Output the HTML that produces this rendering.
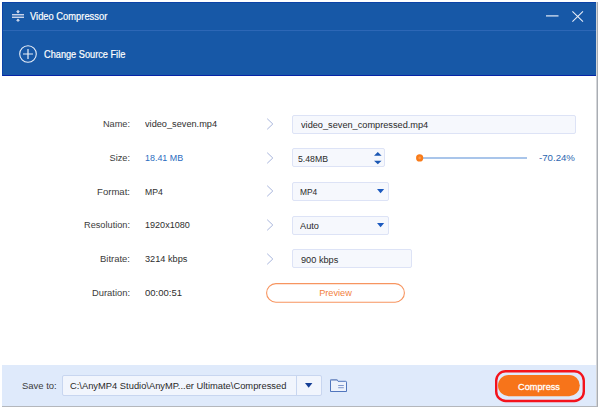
<!DOCTYPE html>
<html><head><meta charset="utf-8">
<style>
*{margin:0;padding:0;box-sizing:border-box}
html,body{width:600px;height:409px;background:#fff;overflow:hidden}
body{font-family:"Liberation Sans",sans-serif;font-size:9.6px;color:#333;position:relative}
.win{position:absolute;left:2px;top:2px;width:596px;height:405px;background:#fff;border-right:1px solid #a9adb3;border-bottom:1px solid #b4b7bc}
.hdr{position:absolute;left:0;top:0;width:594px;height:74px;background:#1758a7;border-left:1px solid #0c43a8;border-top:1px solid #0c43a8;border-bottom:1px solid #0624a6}
.sep{position:absolute;left:0;top:27px;width:593px;height:1px;background:#2d67b6}
.t{position:absolute;white-space:nowrap;line-height:12px;transform-origin:0 50%;transform:scaleX(.958)}
.title{left:26.8px;top:7.6px;color:#fff;font-size:10.2px;transform:scaleX(.918);-webkit-text-stroke:.2px #fff}
.chg{left:40.6px;top:45.5px;color:#fff;font-size:10.2px;transform:scaleX(.903);-webkit-text-stroke:.2px #fff}
.lbl{color:#3c3c3c;text-align:right;width:100px;left:28px;transform-origin:100% 50%}
.val{left:143px;color:#2e2e2e}
.box{position:absolute;border:1px solid #dde3f6;background:#f6f8fd;border-radius:2px}
.box .t{left:7px;color:#2a2a2a}
.ftr{position:absolute;left:0;top:363px;width:594px;height:41px;background:#dfeafb}
svg{position:absolute;overflow:visible}
.chev{left:264px}
</style></head><body>
<div class="win">
 <div style="position:absolute;left:594px;top:0;width:1px;height:404px;background:#d4d6d9"></div>
 <div class="hdr">
  <div class="sep"></div>
  <svg style="left:7.8px;top:6.4px" width="14" height="14" viewBox="0 0 14 14"><g fill="#dde2f2"><rect x="1" y="5.1" width="12" height="1.3"/><rect x="1" y="7.6" width="12" height="1.3"/><path d="M7 4.5L5 2.3h1.4V1h1.2v1.3H9z"/><path d="M7 9.6L5 11.8h1.4v1h1.2v-1H9z"/></g></svg>
  <div class="t title">Video Compressor</div>
  <svg style="left:542.5px;top:12.4px" width="13" height="2"><rect width="12.5" height="1.2" y="0.3" fill="#e6ecf7"/></svg>
  <svg style="left:569px;top:8px" width="12" height="12" viewBox="0 0 12 12"><path d="M0.4 0.4L11 10.6M11 0.4L0.4 10.6" stroke="#e6ecf7" stroke-width="1.1" fill="none"/></svg>
  <svg style="left:15.7px;top:41.9px" width="18" height="18" viewBox="0 0 18 18"><circle cx="9" cy="9" r="8.3" fill="none" stroke="#e8eef8" stroke-width="1.1"/><path d="M4 9H14M9 4V14" stroke="#e8eef8" stroke-width="1.2"/></svg>
  <div class="t chg">Change Source File</div>
 </div>

 <div class="t lbl" style="top:116.1px">Name:</div><div class="t val" style="top:116.1px">video_seven.mp4</div>
 <div class="t lbl" style="top:149.9px">Size:</div><div class="t val" style="top:149.9px;color:#2b6cc0;transform:scaleX(0.929)">18.41 MB</div>
 <div class="t lbl" style="top:183.6px;transform:scaleX(0.996)">Format:</div><div class="t val" style="top:183.6px;transform:scaleX(0.901)">MP4</div>
 <div class="t lbl" style="top:217.4px">Resolution:</div><div class="t val" style="top:217.4px;transform:scaleX(0.944)">1920x1080</div>
 <div class="t lbl" style="top:251.1px;transform:scaleX(0.987)">Bitrate:</div><div class="t val" style="top:251.1px">3214 kbps</div>
 <div class="t lbl" style="top:284.9px;transform:scaleX(0.977)">Duration:</div><div class="t val" style="top:284.9px;transform:scaleX(0.992)">00:00:51</div>

 <svg class="chev" style="top:116px" width="8" height="12" viewBox="0 0 8 12"><path d="M1.2 0.7L6.8 6L1.2 11.3" fill="none" stroke="#a9b6dd" stroke-width="1"/></svg>
 <svg class="chev" style="top:150px" width="8" height="12" viewBox="0 0 8 12"><path d="M1.2 0.7L6.8 6L1.2 11.3" fill="none" stroke="#a9b6dd" stroke-width="1"/></svg>
 <svg class="chev" style="top:183px" width="8" height="12" viewBox="0 0 8 12"><path d="M1.2 0.7L6.8 6L1.2 11.3" fill="none" stroke="#a9b6dd" stroke-width="1"/></svg>
 <svg class="chev" style="top:217px" width="8" height="12" viewBox="0 0 8 12"><path d="M1.2 0.7L6.8 6L1.2 11.3" fill="none" stroke="#a9b6dd" stroke-width="1"/></svg>
 <svg class="chev" style="top:251px" width="8" height="12" viewBox="0 0 8 12"><path d="M1.2 0.7L6.8 6L1.2 11.3" fill="none" stroke="#a9b6dd" stroke-width="1"/></svg>

 <div class="box" style="left:290px;top:113px;width:284px;height:19px"><div class="t" style="top:3px;left:8px">video_seven_compressed.mp4</div></div>
 <div class="box" style="left:290px;top:146px;width:93px;height:19px"><div class="t" style="top:3.5px;left:5px;transform:scaleX(0.906)">5.48MB</div>
  <svg style="left:80.8px;top:3px" width="7.6" height="12.4" viewBox="0 0 7.6 12.4"><path d="M0 3.8L3.8 0L7.6 3.8z M0 8.7L3.8 12.3L7.6 8.7z" fill="#1c58b4"/></svg></div>
 <div class="box" style="left:290px;top:180px;width:97px;height:19px"><div class="t" style="top:3.1px;transform:scaleX(0.875)">MP4</div>
  <svg style="left:83.6px;top:6.3px" width="7.2" height="4.2" viewBox="0 0 7.2 4.2"><path d="M0 0H7.2L3.6 4.2z" fill="#1c5abf"/></svg></div>
 <div class="box" style="left:290px;top:214px;width:97px;height:19px"><div class="t" style="top:3.1px">Auto</div>
  <svg style="left:83.6px;top:6.3px" width="7.2" height="4.2" viewBox="0 0 7.2 4.2"><path d="M0 0H7.2L3.6 4.2z" fill="#1c5abf"/></svg></div>
 <div class="box" style="left:290px;top:247px;width:120px;height:19px"><div class="t" style="top:3.5px;left:7.5px">900 kbps</div></div>

 <div style="position:absolute;left:420px;top:155px;width:105px;height:2px;background:#a9c5ea"></div>
 <svg style="left:413px;top:151px" width="10" height="10"><circle cx="4.65" cy="4.9" r="3.6" fill="#f97b19"/><circle cx="4.65" cy="4.9" r="1.3" fill="#fb9a4c"/></svg>
 <div class="t" style="left:537px;top:149.9px;color:#2b66b0;font-size:9.8px;transform:scaleX(.985)">-70.24%</div>

 <svg style="left:263.5px;top:281.2px" width="139" height="20"><rect x="0.6" y="0.6" width="137.8" height="18.6" rx="9.3" fill="#fff" stroke="#f79560" stroke-width="1.1"/></svg>
 <div class="t" style="left:264.5px;width:137px;text-align:center;top:285.4px;color:#f28040;transform-origin:50% 50%">Preview</div>

 <div class="ftr">
  <div class="t" style="left:19.6px;top:15px;color:#3c3c3c;transform:scaleX(0.987)">Save to:</div>
  <div class="box" style="left:60px;top:10px;width:260px;height:21px;background:#f1f5fd;border-color:#c8d6f0"><div class="t" style="top:4px;left:7px;transform:scaleX(0.974)">C:\AnyMP4 Studio\AnyMP...er Ultimate\Compressed</div>
   <div style="position:absolute;left:233px;top:0;width:1px;height:19px;background:#c8d6f0"></div>
   <svg style="left:242.3px;top:7px" width="7.4" height="4.8" viewBox="0 0 7.4 4.8"><path d="M0 0H7.4L3.7 4.8z" fill="#153f96"/></svg>
  </div>
  <svg style="left:328px;top:14px" width="17" height="13" viewBox="0 0 17 13"><path d="M0.5 12.5V1.2Q0.5 0.5 1.3 0.5H6.8L8 2.3H15.6Q16.5 2.3 16.5 3.2V12.5z" fill="#edf2fc" stroke="#3f68b5" stroke-width="0.9"/><rect x="0.8" y="0.3" width="6.6" height="1.5" fill="#8ea3cf"/><rect x="8.2" y="6" width="5.6" height="1" fill="#7f98cc"/><rect x="8.2" y="8.2" width="5.6" height="1" fill="#7f98cc"/></svg>
  <svg style="left:496px;top:10px" width="82" height="21.4"><rect x="0" y="0" width="81.8" height="21.2" rx="10.6" fill="#f7741a"/></svg>
  <div class="t" style="left:496px;width:82px;text-align:center;top:15.6px;color:#fff;transform-origin:50% 50%;-webkit-text-stroke:.3px #fff">Compress</div>
  <svg style="left:492.6px;top:4.7px" width="90" height="32.2"><rect x="1.2" y="1.2" width="87.6" height="29.8" rx="9.5" fill="none" stroke="#f4131c" stroke-width="2.4"/></svg>
 </div>
</div>
</body></html>
